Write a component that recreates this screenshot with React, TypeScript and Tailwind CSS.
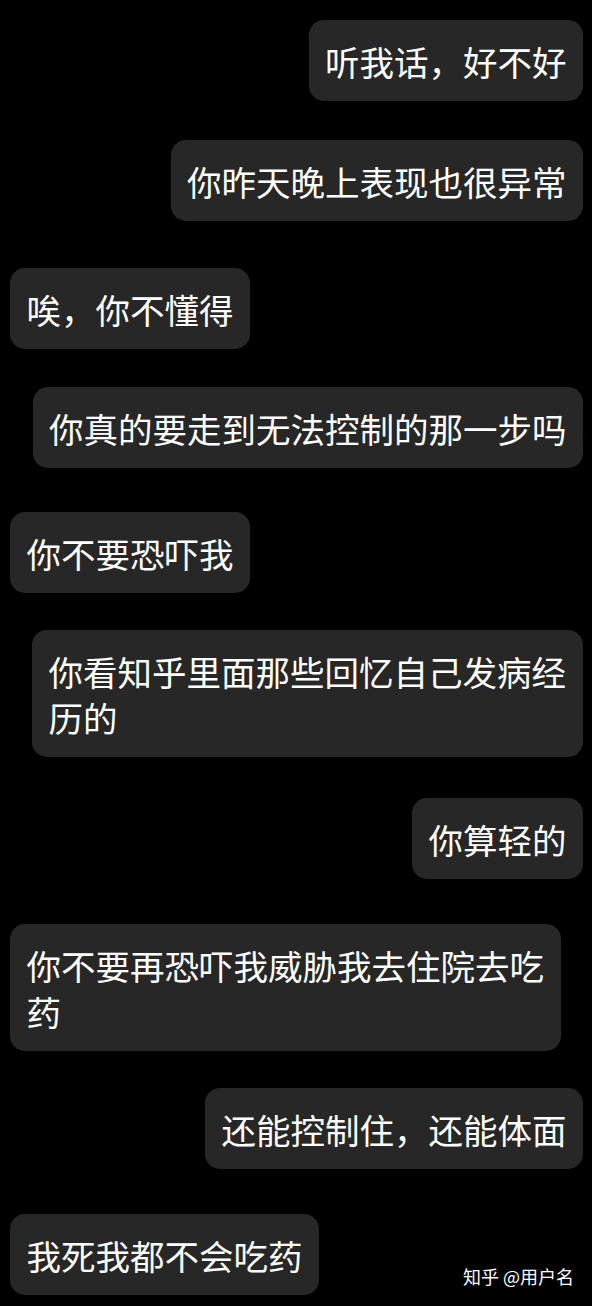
import React from 'react';

type Msg = { text: string; mine: boolean; gap: string };

const messages: Msg[] = [
  { text: '听我话，好不好', mine: true, gap: 'mt-0' },
  { text: '你昨天晚上表现也很异常', mine: true, gap: 'mt-[39px]' },
  { text: '唉，你不懂得', mine: false, gap: 'mt-[47px]' },
  { text: '你真的要走到无法控制的那一步吗', mine: true, gap: 'mt-[38px]' },
  { text: '你不要恐吓我', mine: false, gap: 'mt-[44px]' },
  { text: '你看知乎里面那些回忆自己发病经历的', mine: true, gap: 'mt-[37px]' },
  { text: '你算轻的', mine: true, gap: 'mt-[41px]' },
  { text: '你不要再恐吓我威胁我去住院去吃药', mine: false, gap: 'mt-[45px]' },
  { text: '还能控制住，还能体面', mine: true, gap: 'mt-[37px]' },
];

const Bubble: React.FC<{ text: string }> = ({ text }) => (
  <div className="max-w-[551px] rounded-[15px] bg-[#272727] px-[16.5px] pt-[18px] pb-[17px] text-[34.5px] leading-[46px] text-white">
    {text}
  </div>
);

export default function App() {
  return (
    <div
      className="min-h-[1306px] w-full bg-black pt-[20px] pb-[11px]"
      style={{ fontFamily: '"Noto Sans CJK SC", "Noto Sans", sans-serif' }}
    >
      {messages.map((m, i) => (
        <div
          key={i}
          className={`flex ${m.gap} ${m.mine ? 'justify-end pr-[9px]' : 'justify-start pl-[10px]'}`}
        >
          <Bubble text={m.text} />
        </div>
      ))}

      <div className="mt-[45px] flex items-end justify-between pl-[10px] pr-[18px]">
        <Bubble text="我死我都不会吃药" />
        <span className="mb-[6px] text-[18px] leading-[26px] text-white">知乎 @用户名</span>
      </div>
    </div>
  );
}
